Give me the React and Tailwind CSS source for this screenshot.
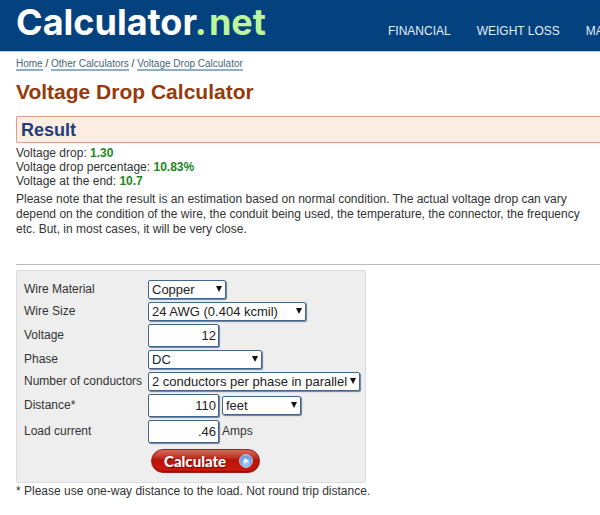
const results = [
  { label: 'Voltage drop', value: '1.30' },
  { label: 'Voltage drop percentage', value: '10.83%' },
  { label: 'Voltage at the end', value: '10.7' },
];

const navLinks = ['FINANCIAL', 'WEIGHT LOSS', 'MATH'];

function Crumb({ children }) {
  return (
    <a href="#" className="border-b-2 border-[#8fb0c4] text-[#3f6680]">{children}</a>
  );
}

function Select({ id, label, width, options }) {
  return (
    <span className={`relative inline-block ${width}`}>
      <select
        id={id}
        aria-label={label}
        className="block w-full h-[19px] pl-[3px] appearance-none rounded-xs border border-[#44658a] bg-white text-[13px] leading-4 text-[#222] shadow-[1px_1px_1px_#6b7f96]"
      >
        {options.map((o) => (
          <option key={o}>{o}</option>
        ))}
      </select>
      <svg viewBox="0 0 6 6" className="absolute right-1 top-1.5 size-1.5 pointer-events-none" aria-hidden="true">
        <path d="M0 0h6L3 6z" fill="#111" />
      </svg>
    </span>
  );
}

function NumberBox({ id, value }) {
  return (
    <input
      id={id}
      type="text"
      defaultValue={value}
      className="block w-[71px] h-[23px] px-0.5 rounded-xs border border-[#44658a] bg-white text-right text-[13px] text-[#222] shadow-[1px_1px_1px_#6b7f96]"
    />
  );
}

function Row({ id, label, children }) {
  return (
    <div className="flex items-center">
      <label htmlFor={id} className="w-[124px] shrink-0 whitespace-nowrap">{label}</label>
      <div className="flex items-center gap-[3px]">{children}</div>
    </div>
  );
}

function CalculateButton() {
  return (
    <button
      type="submit"
      className="ml-[127px] mt-[3px] flex h-6 w-[109px] items-center justify-between rounded-full border border-[#a3201a] bg-linear-to-b from-[#d4685c] via-[#b81408] via-45% to-[#cc1a0c] pl-3 pr-1.5 shadow-[inset_0_-1px_1px_#8e1108]"
    >
      <span className="font-['Lato',sans-serif] text-[15px] leading-4 font-black text-white [text-shadow:1px_1px_1px_#6b0b05]">Calculate</span>
      <svg viewBox="0 0 14 14" className="size-3.5" aria-hidden="true">
        <circle cx="7" cy="7" r="6.4" fill="#6f9fe0" stroke="#b9d3f5" />
        <circle cx="7" cy="8.5" r="4" fill="#9cc4f5" />
        <path d="M5.4 4.2L9.6 7l-4.2 2.8z" fill="#fff" />
      </svg>
    </button>
  );
}

export default function App() {
  return (
    <div className="bg-white font-['Liberation_Sans',Arial,sans-serif] text-[12px] leading-[15px] text-[#333]">
      <header className="flex h-[52px] overflow-hidden border-b border-[#a9cdea] bg-[#04417f] pl-4 whitespace-nowrap">
        <a href="#" className="w-[372px] shrink-0 pt-1 font-['Inter',sans-serif] text-[36px] leading-9 font-bold text-white">
          Calculator<span className="mr-0.5 text-[#bdf59a]">.</span><span className="text-[#bdf59a]">net</span>
        </a>
        <nav className="flex gap-[26px] pt-6">
          {navLinks.map((link) => (
            <a key={link} href="#" className="text-[#e3eef8]">{link}</a>
          ))}
        </nav>
      </header>

      <main className="pl-4">
        <nav className="pt-1 text-[10px] leading-4">
          <Crumb>Home</Crumb> / <Crumb>Other Calculators</Crumb> / <Crumb>Voltage Drop Calculator</Crumb>
        </nav>
        <h1 className="mt-2 text-[21px] leading-6 font-bold text-[#963a0c]">Voltage Drop Calculator</h1>

        <h2 className="mt-3 h-[27px] rounded-l-xs border border-r-0 border-[#d9a08a] bg-[#fdece4] pl-1 text-[18px] leading-[26px] font-bold text-[#1d3f78]">
          Result
        </h2>
        <div className="mt-[3px] leading-[14px]">
          {results.map((r) => (
            <p key={r.label}>
              {r.label}: <b className="text-[#1d861d]">{r.value}</b>
            </p>
          ))}
        </div>
        <p className="mt-1 pr-4">
          Please note that the result is an estimation based on normal condition. The actual voltage drop can vary depend on the condition of the wire, the conduit being used, the temperature, the connector, the frequency etc. But, in most cases, it will be very close.
        </p>
        <hr className="mt-[27px] border-[#bbb]" />

        <form className="mt-[5px] flex w-[350px] flex-col gap-[3px] rounded-xs border border-[#ddd] bg-[#eee] pt-[9px] pr-1 pb-[9px] pl-[7px]">
          <Row id="material" label="Wire Material">
            <Select id="material" width="w-[78px]" options={['Copper', 'Aluminum']} />
          </Row>
          <Row id="size" label="Wire Size">
            <Select id="size" width="w-[158px]" options={['24 AWG (0.404 kcmil)']} />
          </Row>
          <Row id="voltage" label="Voltage">
            <NumberBox id="voltage" value="12" />
          </Row>
          <Row id="phase" label="Phase">
            <Select id="phase" width="w-[114px]" options={['DC', 'AC single phase']} />
          </Row>
          <Row id="conductors" label="Number of conductors">
            <Select id="conductors" width="w-[212px]" options={['2 conductors per phase in parallel']} />
          </Row>
          <Row id="distance" label="Distance*">
            <NumberBox id="distance" value="110" />
            <Select id="unit" label="Distance unit" width="w-[79px]" options={['feet', 'meters']} />
          </Row>
          <Row id="load" label="Load current">
            <NumberBox id="load" value=".46" />
            <span>Amps</span>
          </Row>
          <CalculateButton />
        </form>
        <p className="pt-px">* Please use one-way distance to the load. Not round trip distance.</p>
      </main>
    </div>
  );
}
